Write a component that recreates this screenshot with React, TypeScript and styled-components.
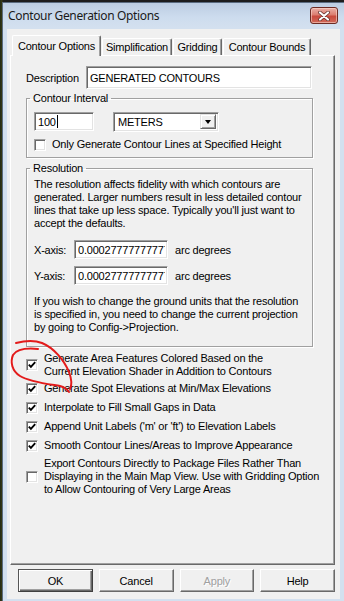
import React from 'react';
import styled, { createGlobalStyle } from 'styled-components';

const FONT = `"Liberation Sans", Arial, sans-serif`;

const Global = createGlobalStyle`
  html, body { margin: 0; padding: 0; background: #1d1d1d; }
  body { width: 344px; height: 601px; overflow: hidden; }
  * { box-sizing: border-box; }
`;

const Screen = styled.div`
  position: relative;
  width: 344px;
  height: 601px;
  padding: 2px 0 0 2px;
  background: linear-gradient(90deg, #202a18 0, #3a3a12 2px, #1d1d1d 3px);
  font-family: ${FONT};
  font-size: 11px;
  letter-spacing: -0.2px;
  color: #000;
`;

const Window = styled.div`
  width: 342px;
  height: 599px;
  display: flex;
  flex-direction: column;
  background: #d3e0ef;
  border-left: 1px solid #5a6b80;
  border-top: 1px solid #5a6b80;
`;

const TitleBar = styled.div`
  height: 24px;
  flex: none;
  display: flex;
  align-items: center;
  justify-content: space-between;
  padding: 0 6px 0 5px;
  background: linear-gradient(#bccde2, #cddcee 60%, #d3e0ef);
`;

const TitleText = styled.span`
  font-family: "Noto Sans", "Open Sans", sans-serif;
  font-size: 12px;
  letter-spacing: -0.35px;
  color: #1a1a1a;
`;

const CloseButton = styled.div`
  width: 28px;
  height: 17px;
  margin-top: 1px;
  border: 1px solid #6c2b24;
  border-radius: 3px;
  background: linear-gradient(#eab0a7, #dc7e70 45%, #c94a3d 55%, #d06a5a);
  box-shadow: inset 0 0 0 1px rgba(255, 220, 210, 0.55);
  display: flex;
  align-items: center;
  justify-content: center;
`;

const Client = styled.div`
  flex: 1;
  margin: 2px 4px 3px 4px;
  background: #f0f0f0;
  display: flex;
  flex-direction: column;
  padding: 6px 5px 7px 3px;
`;

const TabStrip = styled.div`
  height: 20px;
  flex: none;
  display: flex;
  align-items: flex-end;
  gap: 1px;
  padding-left: 2px;
  position: relative;
  z-index: 1;
`;

const Tab = styled.div<{ $active?: boolean; $w: number }>`
  width: ${(p) => p.$w}px;
  height: ${(p) => (p.$active ? 21 : 17)}px;
  margin-bottom: ${(p) => (p.$active ? -1 : 0)}px;
  background: #f0f0f0;
  border-top: 1px solid #fff;
  border-left: 1px solid #fff;
  border-right: 1px solid #696969;
  border-radius: 2px 2px 0 0;
  box-shadow: inset -1px 0 0 #a0a0a0;
  display: flex;
  align-items: ${(p) => (p.$active ? 'flex-start' : 'center')};
  padding-top: ${(p) => (p.$active ? 4 : 0)}px;
  justify-content: center;
  white-space: nowrap;
`;

const Panel = styled.div`
  height: 510px;
  flex: none;
  border: 1px solid;
  border-color: #fff #696969 #696969 #fff;
  box-shadow: inset -1px -1px 0 #a0a0a0;
  padding: 10px 0 0 15px;
  display: flex;
  flex-direction: column;
`;

const FieldRow = styled.div`
  display: flex;
  align-items: center;
  height: 23px;
`;

const Label = styled.span<{ $w: number }>`
  width: ${(p) => p.$w}px;
  flex: none;
  white-space: nowrap;
`;

const TextBox = styled.div<{ $w: number; $h: number }>`
  width: ${(p) => p.$w}px;
  height: ${(p) => p.$h}px;
  flex: none;
  background: #fff;
  border: 1px solid;
  border-color: #a0a0a0 #fff #fff #a0a0a0;
  box-shadow: inset 1px 1px 0 #696969, inset -1px -1px 0 #e3e3e3;
  padding: 0 2px 0 3px;
  display: flex;
  align-items: center;
  overflow: hidden;
  white-space: nowrap;
`;

const ClipValue = styled.span`
  display: block;
  overflow: hidden;
  white-space: nowrap;
  text-overflow: clip;
  width: 100%;
`;

const Caret = styled.span`
  display: inline-block;
  width: 1px;
  height: 13px;
  background: #000;
  margin-left: 1px;
`;

const Group = styled.fieldset<{ $top: number; $pad: string }>`
  margin: ${(p) => p.$top}px 0 0 0;
  width: 287px;
  padding: ${(p) => p.$pad};
  border: 1px solid #a0a0a0;
  box-shadow: 1px 1px 0 #fff, inset 1px 1px 0 #fff;
  min-width: 0;
`;

const Legend = styled.legend`
  padding: 0 3px;
  margin-left: -4px;
  line-height: 13px;
  white-space: nowrap;
`;

const InputRow = styled.div`
  display: flex;
  align-items: center;
  gap: 19px;
  height: 19px;
`;

const Combo = styled.div`
  width: 106px;
  height: 20px;
  background: #fff;
  border: 1px solid;
  border-color: #a0a0a0 #fff #fff #a0a0a0;
  box-shadow: inset 1px 1px 0 #696969, inset -1px -1px 0 #e3e3e3;
  display: flex;
  align-items: center;
  padding: 2px 2px 2px 4px;
`;

const ComboText = styled.span`
  flex: 1;
`;

const ComboButton = styled.div`
  width: 16px;
  height: 15px;
  background: #f0f0f0;
  border: 1px solid;
  border-color: #e3e3e3 #696969 #696969 #e3e3e3;
  box-shadow: inset 1px 1px 0 #fff, inset -1px -1px 0 #a0a0a0;
  display: flex;
  align-items: center;
  justify-content: center;
`;

const Arrow = styled.div`
  width: 0;
  height: 0;
  border-left: 3.5px solid transparent;
  border-right: 3.5px solid transparent;
  border-top: 4px solid #000;
`;

const CheckRow = styled.div<{ $top?: number }>`
  display: flex;
  align-items: center;
  gap: 6px;
  margin-top: ${(p) => p.$top ?? 0}px;
  line-height: 13px;
  white-space: nowrap;
`;

const Box = styled.div`
  width: 12px;
  height: 12px;
  flex: none;
  background: #fff;
  border: 1px solid;
  border-color: #a0a0a0 #fff #fff #a0a0a0;
  box-shadow: inset 1px 1px 0 #696969, inset -1px -1px 0 #e3e3e3;
  display: flex;
  align-items: center;
  justify-content: center;
`;

const Para = styled.div<{ $top: number }>`
  margin-top: ${(p) => p.$top}px;
  line-height: 13px;
  white-space: nowrap;
`;

const AxisRow = styled.div<{ $top: number }>`
  display: flex;
  align-items: center;
  margin-top: ${(p) => p.$top}px;
  height: 19px;
`;

const ArcLabel = styled.span`
  margin-left: 7px;
  white-space: nowrap;
`;

const OptionList = styled.div`
  display: flex;
  flex-direction: column;
  margin-top: 5px;
`;

const OptionText = styled.span`
  line-height: 13px;
`;

const ButtonBar = styled.div`
  display: flex;
  gap: 6px;
  margin-top: 4px;
  padding-left: 8px;
`;

const Button = styled.div<{ $default?: boolean; $disabled?: boolean }>`
  width: 75px;
  height: 23px;
  background: #f0f0f0;
  border: 1px solid;
  border-color: ${(p) => (p.$default ? '#555 #404040 #404040 #555' : '#fff #696969 #696969 #fff')};
  box-shadow: ${(p) =>
    p.$default
      ? 'inset 1px 1px 0 #fff, inset -1px -1px 0 #696969, inset -2px -2px 0 #a0a0a0'
      : 'inset -1px -1px 0 #a0a0a0'};
  display: flex;
  align-items: center;
  justify-content: center;
  color: ${(p) => (p.$disabled ? '#a0a0a0' : '#000')};
  text-shadow: ${(p) => (p.$disabled ? '1px 1px 0 #fff' : 'none')};
`;

const Annotation = styled.svg`
  position: absolute;
  left: 0;
  top: 0;
  pointer-events: none;
`;

function Check({ on }: { on: boolean }) {
  return (
    <Box>
      {on && (
        <svg width="8" height="8" viewBox="0 0 8 8">
          <path d="M0.8 3.6 L2.9 5.8 L7.2 1.2" fill="none" stroke="#000" strokeWidth="1.9" />
        </svg>
      )}
    </Box>
  );
}

const RES = '0.000277777777777778';

export default function App() {
  return (
    <>
      <Global />
      <Screen>
        <Window>
          <TitleBar>
            <TitleText>Contour Generation Options</TitleText>
            <CloseButton>
              <svg width="12" height="10" viewBox="0 0 12 10">
                <path d="M2 1.5 L10 8.5 M10 1.5 L2 8.5" stroke="#5a2a26" strokeWidth="3.6" strokeLinecap="round" />
                <path d="M2 1.5 L10 8.5 M10 1.5 L2 8.5" stroke="#fff" strokeWidth="2.2" strokeLinecap="round" />
              </svg>
            </CloseButton>
          </TitleBar>
          <Client>
            <TabStrip>
              <Tab $active $w={89}>Contour Options</Tab>
              <Tab $w={70}>Simplification</Tab>
              <Tab $w={49}>Gridding</Tab>
              <Tab $w={88}>Contour Bounds</Tab>
            </TabStrip>
            <Panel>
              <FieldRow>
                <Label $w={60}>Description</Label>
                <TextBox $w={226} $h={23}>GENERATED CONTOURS</TextBox>
              </FieldRow>
              <Group $top={3} $pad="7px 7px 6px 7px">
                <Legend>Contour Interval</Legend>
                <InputRow>
                  <TextBox $w={60} $h={19}>
                    100
                    <Caret />
                  </TextBox>
                  <Combo>
                    <ComboText>METERS</ComboText>
                    <ComboButton>
                      <Arrow />
                    </ComboButton>
                  </Combo>
                </InputRow>
                <CheckRow $top={7}>
                  <Check on={false} />
                  <span>Only Generate Contour Lines at Specified Height</span>
                </CheckRow>
              </Group>
              <Group $top={4} $pad="3px 7px 12px 7px">
                <Legend>Resolution</Legend>
                <Para $top={0}>
                  The resolution affects fidelity with which contours are
                  <br />
                  generated. Larger numbers result in less detailed contour
                  <br />
                  lines that take up less space. Typically you'll just want to
                  <br />
                  accept the defaults.
                </Para>
                <AxisRow $top={10}>
                  <Label $w={40}>X-axis:</Label>
                  <TextBox $w={94} $h={19}>
                    <ClipValue>{RES}</ClipValue>
                  </TextBox>
                  <ArcLabel>arc degrees</ArcLabel>
                </AxisRow>
                <AxisRow $top={7}>
                  <Label $w={40}>Y-axis:</Label>
                  <TextBox $w={94} $h={19}>
                    <ClipValue>{RES}</ClipValue>
                  </TextBox>
                  <ArcLabel>arc degrees</ArcLabel>
                </AxisRow>
                <Para $top={10}>
                  If you wish to change the ground units that the resolution
                  <br />
                  is specified in, you need to change the current projection
                  <br />
                  by going to Config-&gt;Projection.
                </Para>
              </Group>
              <OptionList>
                <CheckRow>
                  <Check on />
                  <OptionText>
                    Generate Area Features Colored Based on the
                    <br />
                    Current Elevation Shader in Addition to Contours
                  </OptionText>
                </CheckRow>
                <CheckRow $top={4}>
                  <Check on />
                  <OptionText>Generate Spot Elevations at Min/Max Elevations</OptionText>
                </CheckRow>
                <CheckRow $top={6}>
                  <Check on />
                  <OptionText>Interpolate to Fill Small Gaps in Data</OptionText>
                </CheckRow>
                <CheckRow $top={6}>
                  <Check on />
                  <OptionText>Append Unit Labels ('m' or 'ft') to Elevation Labels</OptionText>
                </CheckRow>
                <CheckRow $top={6}>
                  <Check on />
                  <OptionText>Smooth Contour Lines/Areas to Improve Appearance</OptionText>
                </CheckRow>
                <CheckRow $top={5}>
                  <Check on={false} />
                  <OptionText>
                    Export Contours Directly to Package Files Rather Than
                    <br />
                    Displaying in the Main Map View. Use with Gridding Option
                    <br />
                    to Allow Contouring of Very Large Areas
                  </OptionText>
                </CheckRow>
              </OptionList>
            </Panel>
            <ButtonBar>
              <Button $default>OK</Button>
              <Button>Cancel</Button>
              <Button $disabled>Apply</Button>
              <Button>Help</Button>
            </ButtonBar>
          </Client>
        </Window>
        <Annotation width="344" height="601" viewBox="0 0 344 601">
          <path
            d="M16 343 C 24 341, 34 340, 42 343 C 54 348, 64 360, 69 372 C 72 380, 72 385, 70 389"
            fill="none"
            stroke="#e31b1b"
            strokeWidth="2"
            strokeLinecap="round"
          />
          <path
            d="M38 349 C 28 348, 17 349, 13 355 C 10 362, 12 371, 20 376 C 30 382, 48 384, 60 386 C 64 387, 67 389, 69 392"
            fill="none"
            stroke="#e31b1b"
            strokeWidth="2"
            strokeLinecap="round"
          />
        </Annotation>
      </Screen>
    </>
  );
}
